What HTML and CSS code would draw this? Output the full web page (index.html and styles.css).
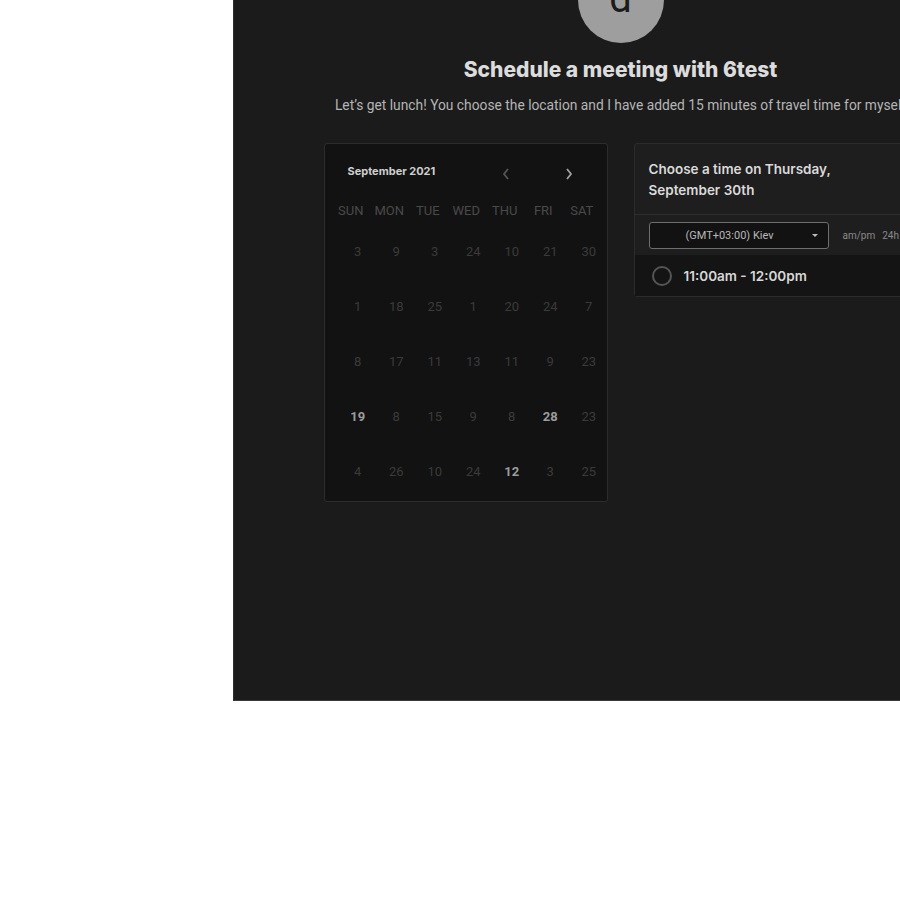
FILE: index.html
```html
<!DOCTYPE html>
<html>
<head>
<meta charset="utf-8">
<link rel="stylesheet" href="styles.css">
</head>
<body>
<div class="page">
  <div class="avatar"><span>d</span></div>
  <h1 class="title">Schedule a meeting with 6test</h1>
  <p class="desc">Let’s get lunch! You choose the location and I have added 15 minutes of travel time for myself</p>
  <div class="panels">
    <div class="calendar">
      <div class="cal-head">
        <span class="month">September 2021</span>
        <span class="nav prev"><svg width="10" height="14" viewBox="0 0 10 14"><path d="M7 2 L3 7 L7 12" fill="none" stroke="currentColor" stroke-width="1.8"/></svg></span>
        <span class="nav next"><svg width="10" height="14" viewBox="0 0 10 14"><path d="M3 2 L7 7 L3 12" fill="none" stroke="currentColor" stroke-width="1.8"/></svg></span>
      </div>
      <div class="weekdays">
        <span>SUN</span><span>MON</span><span>TUE</span><span>WED</span><span>THU</span><span>FRI</span><span>SAT</span>
      </div>
      <div class="days">
        <span>3</span><span>9</span><span>3</span><span>24</span><span>10</span><span>21</span><span>30</span>
        <span>1</span><span>18</span><span>25</span><span>1</span><span>20</span><span>24</span><span>7</span>
        <span>8</span><span>17</span><span>11</span><span>13</span><span>11</span><span>9</span><span>23</span>
        <span class="on">19</span><span>8</span><span>15</span><span>9</span><span>8</span><span class="on">28</span><span>23</span>
        <span>4</span><span>26</span><span>10</span><span>24</span><span class="on">12</span><span>3</span><span>25</span>
      </div>
    </div>
    <div class="times">
      <div class="times-head">Choose a time on Thursday,<br>September 30th</div>
      <div class="tz-row">
        <div class="select"><span>(GMT+03:00) Kiev</span><span class="caret"></span></div>
        <span class="fmt">am/pm</span><span class="fmt">24h</span>
      </div>
      <div class="slot">
        <span class="radio"></span>
        <span class="slot-text">11:00am - 12:00pm</span>
      </div>
    </div>
  </div>
</div>
</body>
</html>
```
FILE: styles.css
```css
html, body {
  margin: 0;
  padding: 0;
  background: #ffffff;
  overflow: hidden;
}
.page {
  margin-left: 233px;
  width: 774px;
  height: 701px;
  box-sizing: border-box;
  background: #1b1b1b;
  border-left: 1px solid #2e2e2e;
  border-bottom: 1px solid #3a3a3a;
  display: flex;
  flex-direction: column;
  align-items: center;
  overflow: hidden;
  font-family: Roboto, "Liberation Sans", sans-serif;
}
.avatar {
  width: 86px;
  height: 86px;
  margin-top: -43px;
  border-radius: 50%;
  background: #9e9e9e;
  display: flex;
  align-items: center;
  justify-content: center;
  flex-shrink: 0;
}
.avatar span {
  font-family: Roboto, sans-serif;
  font-size: 40px;
  color: #1b1b1b;
  line-height: 1;
  margin-top: -2px;
}
.title {
  margin: 15px 0 0;
  font-family: Inter, "Noto Sans", sans-serif;
  font-weight: 800;
  font-size: 21px;
  line-height: 24px;
  letter-spacing: 0;
  color: #dcdcdc;
}
.desc {
  margin: 14px 0 0;
  font-size: 13.8px;
  line-height: 18px;
  color: #b5b5b5;
  white-space: nowrap;
}
.panels {
  margin-top: 29px;
  display: flex;
  gap: 26px;
  align-items: flex-start;
}
.calendar {
  width: 284px;
  height: 359px;
  box-sizing: border-box;
  background: #121212;
  border: 1px solid #2c2c2c;
  border-radius: 3px;
  overflow: hidden;
}
.cal-head {
  height: 56px;
  display: flex;
  align-items: center;
  padding-left: 23px;
  margin-top: -1px;
}
.month {
  font-family: Inter, sans-serif;
  font-weight: 700;
  font-size: 11px;
  color: #cfcfcf;
  width: 148px;
  margin-top: 0;
}
.nav {
  display: flex;
  align-items: center;
  justify-content: center;
  width: 20px;
  height: 20px;
  margin-top: 6px;
}
.prev { color: #555555; margin-left: 0; }
.next { color: #a0a0a0; margin-left: 43px; }
.weekdays {
  display: grid;
  grid-template-columns: repeat(7, 38.5px);
  margin-left: 7px;
  height: 22px;
  align-items: center;
  font-size: 13px;
  color: #4a4a4a;
}
.weekdays span, .days span { text-align: center; }
.days {
  display: grid;
  grid-template-columns: repeat(7, 38.5px);
  grid-auto-rows: 55px;
  margin-left: 14px;
  margin-top: 3px;
  align-items: center;
  font-size: 13px;
  color: #3b3b3b;
}
.days .on {
  color: #9c9c9c;
  font-weight: 700;
}
.times {
  width: 284px;
  box-sizing: border-box;
  background: #1e1e1e;
  border: 1px solid #2c2c2c;
  border-radius: 3px;
}
.times-head {
  padding: 15px 14px 13px;
  font-family: Inter, sans-serif;
  font-weight: 600;
  font-size: 13.5px;
  line-height: 21px;
  color: #dadada;
  border-bottom: 1px solid #2e2e2e;
}
.tz-row {
  height: 40px;
  display: flex;
  align-items: center;
  padding-left: 14px;
}
.select {
  width: 180px;
  height: 27px;
  box-sizing: border-box;
  border: 1px solid #6e6e6e;
  border-radius: 3px;
  background: #121212;
  display: flex;
  align-items: center;
  justify-content: center;
  position: relative;
  font-size: 11px;
  color: #b8b8b8;
}
.select span:first-child { margin-left: -18px; }
.caret {
  position: absolute;
  right: 10px;
  top: 11px;
  width: 0;
  height: 0;
  border-left: 3px solid transparent;
  border-right: 3px solid transparent;
  border-top: 3px solid #bbbbbb;
}
.fmt {
  font-size: 10px;
  color: #8a8a8a;
  margin-left: 14px;
}
.fmt + .fmt { margin-left: 7px; }
.slot {
  height: 41px;
  background: #141414;
  display: flex;
  align-items: center;
  padding-left: 17px;
}
.radio {
  width: 20px;
  height: 20px;
  box-sizing: border-box;
  border: 2px solid #555555;
  border-radius: 50%;
}
.slot-text {
  margin-left: 12px;
  font-family: Inter, sans-serif;
  font-weight: 600;
  font-size: 13.5px;
  color: #d8d8d8;
}
```
